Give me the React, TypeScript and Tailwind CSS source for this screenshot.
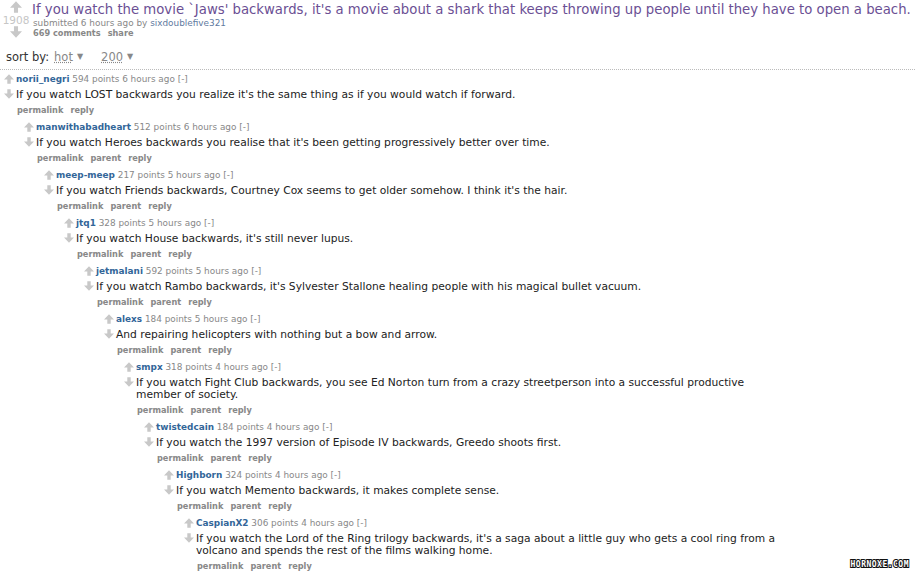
import React from "react";

type C = { user: string; pts: number; age: string; body: string; parent?: boolean };

const comments: C[] = [
  { user: "norii_negri", pts: 594, age: "6 hours ago", body: "If you watch LOST backwards you realize it's the same thing as if you would watch if forward." },
  { user: "manwithabadheart", pts: 512, age: "6 hours ago", body: "If you watch Heroes backwards you realise that it's been getting progressively better over time.", parent: true },
  { user: "meep-meep", pts: 217, age: "5 hours ago", body: "If you watch Friends backwards, Courtney Cox seems to get older somehow. I think it's the hair.", parent: true },
  { user: "jtq1", pts: 328, age: "5 hours ago", body: "If you watch House backwards, it's still never lupus.", parent: true },
  { user: "jetmalani", pts: 592, age: "5 hours ago", body: "If you watch Rambo backwards, it's Sylvester Stallone healing people with his magical bullet vacuum.", parent: true },
  { user: "alexs", pts: 184, age: "5 hours ago", body: "And repairing helicopters with nothing but a bow and arrow.", parent: true },
  { user: "smpx", pts: 318, age: "4 hours ago", body: "If you watch Fight Club backwards, you see Ed Norton turn from a crazy streetperson into a successful productive member of society.", parent: true },
  { user: "twistedcain", pts: 184, age: "4 hours ago", body: "If you watch the 1997 version of Episode IV backwards, Greedo shoots first.", parent: true },
  { user: "Highborn", pts: 324, age: "4 hours ago", body: "If you watch Memento backwards, it makes complete sense.", parent: true },
  { user: "CaspianX2", pts: 306, age: "4 hours ago", body: "If you watch the Lord of the Ring trilogy backwards, it's a saga about a little guy who gets a cool ring from a volcano and spends the rest of the films walking home.", parent: true },
];

function Arrow({ down, size = 10 }: { down?: boolean; size?: number }) {
  return (
    <svg width={size} height={size} viewBox="0 0 10 10" className={down ? "rotate-180" : ""}>
      <path d="M5 0.3 L10 5.6 L6.7 5.6 L6.7 9.8 L3.3 9.8 L3.3 5.6 L0 5.6 Z" fill="#c8c8c8" />
    </svg>
  );
}

function Comment({ i }: { i: number }) {
  const c = comments[i];
  return (
    <div>
      <div className="flex">
        <div className="flex w-[12px] flex-col items-center gap-[5px] pt-[1px]">
          <Arrow />
          <Arrow down />
        </div>
        <div className="ml-[1px]">
          <div className="h-[12px] text-[8.9px] leading-[12px] text-[#888]">
            <span className="font-bold text-[#336699]">{c.user}</span> {c.pts} points {c.age} [-]
          </div>
          <div className="mt-[4px] max-w-[616px] text-[10.7px] leading-[12px] text-[#222]">{c.body}</div>
          <div className="mt-[3px] flex h-[12px] gap-[7px] pl-[1px] text-[8.2px] font-bold leading-[12px] text-[#888]">
            <span>permalink</span>
            {c.parent && <span>parent</span>}
            <span>reply</span>
          </div>
        </div>
      </div>
      {i + 1 < comments.length && (
        <div className="ml-[20px] mt-[5px]">
          <Comment i={i + 1} />
        </div>
      )}
    </div>
  );
}

export default function App() {
  return (
    <div className="relative h-[574px] w-[915px] overflow-hidden bg-white font-['DejaVu_Sans',sans-serif]">
      <div className="flex pt-[1px]">
        <div className="flex w-[32px] flex-col items-center">
          <Arrow size={12} />
          <div className="mt-[2px] text-[10.5px] leading-[10px] text-[#c6c6c6]">1908</div>
          <div className="mt-[1px]"><Arrow size={12} down /></div>
        </div>
        <div>
          <div className="text-[13.25px] leading-[17px] whitespace-nowrap text-[#6b4f94]">
            If you watch the movie `Jaws' backwards, it's a movie about a shark that keeps throwing up people until they have to open a beach.
          </div>
          <div className="ml-[1px] text-[8.9px] leading-[10px] text-[#888]">
            submitted 6 hours ago by <span className="text-[#5f7aa0]">sixdoublefive321</span>
          </div>
          <div className="ml-[1px] flex gap-[7px] text-[8.2px] font-bold leading-[10px] text-[#888]">
            <span>669 comments</span>
            <span>share</span>
          </div>
        </div>
      </div>
      <div className="mt-[12px] flex items-center pl-[6px] text-[11.5px] leading-[14px] text-[#333]">
        <span>sort by:</span>
        <span className="ml-[5px] text-[#888] underline decoration-dotted">hot</span>
        <span className="ml-[4px] text-[8px] text-[#888]">▼</span>
        <span className="ml-[18px] text-[#888] underline decoration-dotted">200</span>
        <span className="ml-[4px] text-[8px] text-[#888]">▼</span>
      </div>
      <div className="mt-[5px] border-t border-dotted border-[#bbb]" />
      <div className="ml-[3px] mt-[3px]">
        <Comment i={0} />
      </div>
      <div className="absolute bottom-[3px] right-[6px] text-[8px] font-bold tracking-[0.5px] text-white [-webkit-text-stroke:2px_#111] [paint-order:stroke_fill] font-['DejaVu_Sans_Mono',monospace]">
        HORNOXE.COM
      </div>
    </div>
  );
}
